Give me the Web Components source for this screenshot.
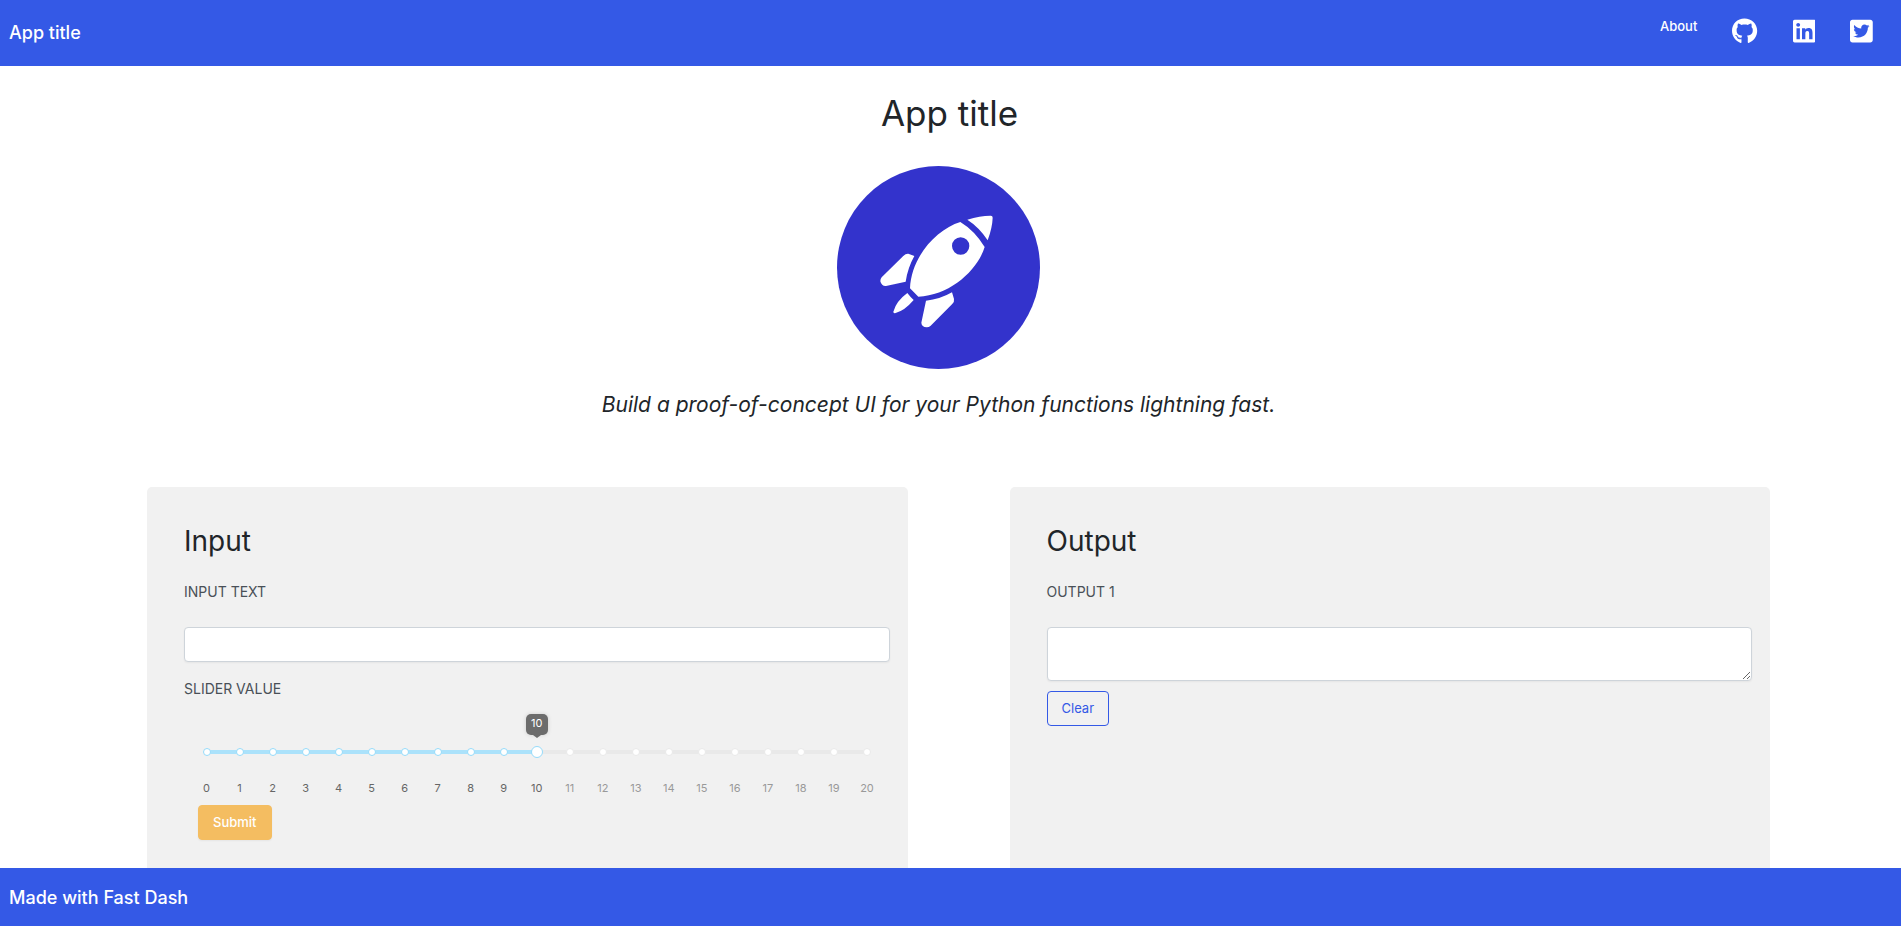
<!DOCTYPE html>
<html lang="en">
<head>
<meta charset="utf-8">
<meta name="viewport" content="width=device-width, initial-scale=1">
<title>App title</title>
<style>
  body { margin: 0; background: #fff; color: #212529; font: 14px/21px Inter, "Open Sans", sans-serif; font-optical-sizing: none; }
</style>
</head>
<body>
<fast-app></fast-app>

<script>
const define = (name, html, setup) => {
  const template = document.createElement('template');
  template.innerHTML = html;
  customElements.define(name, class extends HTMLElement {
    constructor() {
      super();
      this.attachShadow({ mode: 'open' }).append(template.content.cloneNode(true));
    }
    connectedCallback() { if (setup) setup(this, this.shadowRoot); }
  });
};

define('app-header', `
<style>
  :host { display: block; background: #3459e6; color: #fff; }
  header { display: flex; justify-content: space-between; align-items: flex-start; min-height: 66px; padding: 0 28px 0 9px; box-sizing: border-box; }
  .brand { font-size: 18px; line-height: 66px; font-weight: 500; color: inherit; text-decoration: none; }
  nav { display: flex; align-items: flex-start; gap: 35px; padding-top: 18px; }
  nav a { display: block; color: inherit; text-decoration: none; font-size: 13px; line-height: 17px; font-weight: 500; }
  svg { display: block; height: 26px; fill: currentColor; }
</style>
<header>
  <a class="brand" href="#"><slot></slot></a>
  <nav aria-label="Links">
    <a href="#about">About</a>
    <a href="#github" aria-label="GitHub"><svg viewBox="0 0 496 512"><path d="M165.900 397.400c0 2-2.300 3.600-5.200 3.600-3.300.3-5.600-1.300-5.600-3.600 0-2 2.300-3.600 5.200-3.600 3-.3 5.600 1.300 5.600 3.600zm-31.100-4.500c-.7 2 1.300 4.300 4.300 4.900 2.600 1 5.600 0 6.200-2s-1.300-4.300-4.300-5.200c-2.600-.7-5.500.3-6.200 2.300zm44.200-1.700c-2.900.7-4.900 2.600-4.600 4.900.3 2 2.900 3.300 5.900 2.600 2.900-.7 4.900-2.600 4.600-4.600-.3-1.900-3-3.200-5.900-2.900zM244.800 8C106.100 8 0 113.300 0 252c0 110.900 69.800 205.800 169.500 239.200 12.800 2.300 17.300-5.600 17.300-12.100 0-6.200-.3-40.400-.3-61.400 0 0-70 15-84.700-29.800 0 0-11.400-29.100-27.800-36.600 0 0-22.900-15.700 1.600-15.400 0 0 24.900 2 38.600 25.800 21.900 38.600 58.600 27.500 72.900 20.900 2.300-16 8.800-27.100 16-33.700-55.900-6.200-112.300-14.300-112.300-110.500 0-27.500 7.600-41.300 23.600-58.900-2.600-6.500-11.100-33.300 2.600-67.900 20.900-6.500 69 27 69 27 20-5.600 41.500-8.500 62.800-8.500s42.800 2.900 62.800 8.500c0 0 48.100-33.600 69-27 13.700 34.700 5.200 61.400 2.600 67.900 16 17.700 25.800 31.500 25.800 58.900 0 96.500-58.900 104.200-114.800 110.500 9.200 7.900 17 22.900 17 46.400 0 33.700-.3 75.400-.3 83.600 0 6.500 4.600 14.400 17.300 12.100C428.200 457.800 496 362.900 496 252 496 113.300 383.500 8 244.800 8zM97.200 352.900c-1.300 1-1 3.300.7 5.200 1.600 1.600 3.900 2.300 5.200 1 1.300-1 1-3.300-.7-5.200-1.600-1.600-3.900-2.300-5.200-1zm-10.800-8.100c-.7 1.300.3 2.900 2.300 3.900 1.600 1 3.600.7 4.300-.7.7-1.300-.3-2.900-2.300-3.900-2-.6-3.600-.3-4.300.7zm32.400 35.600c-1.600 1.300-1 4.300 1.300 6.200 2.300 2.300 5.200 2.600 6.500 1 1.300-1.300.7-4.300-1.300-6.200-2.200-2.300-5.200-2.600-6.500-1zm-11.400-14.700c-1.600 1-1.600 3.600 0 5.900 1.600 2.300 4.300 3.300 5.600 2.300 1.600-1.300 1.600-3.900 0-6.200-1.400-2.300-4-3.300-5.600-2z"/></svg></a>
    <a href="#linkedin" aria-label="LinkedIn"><svg viewBox="0 0 448 512"><path d="M416 32H31.900C14.300 32 0 46.500 0 64.300v383.400C0 465.500 14.300 480 31.900 480H416c17.600 0 32-14.500 32-32.300V64.300c0-17.800-14.400-32.300-32-32.300zM135.400 416H69V202.200h66.500V416zm-33.200-243c-21.300 0-38.500-17.300-38.500-38.500S80.900 96 102.200 96c21.200 0 38.500 17.300 38.500 38.500 0 21.300-17.200 38.500-38.500 38.500zm282.100 243h-66.400V312c0-24.800-.5-56.700-34.500-56.700-34.600 0-39.900 27-39.900 54.900V416h-66.400V202.200h63.700v29.200h.9c8.900-16.800 30.600-34.500 62.900-34.500 67.200 0 79.700 44.300 79.700 101.900V416z"/></svg></a>
    <a href="#twitter" aria-label="Twitter"><svg viewBox="0 0 448 512"><path d="M400 32H48C21.500 32 0 53.500 0 80v352c0 26.500 21.500 48 48 48h352c26.500 0 48-21.500 48-48V80c0-26.500-21.500-48-48-48zm-48.900 158.800c.2 2.800.2 5.700.2 8.500 0 86.700-66 186.600-186.600 186.600-37.200 0-71.700-10.800-100.700-29.400 5.300.6 10.400.8 15.800.8 30.700 0 58.900-10.400 81.400-28-28.800-.6-53-19.500-61.300-45.500 10.100 1.500 19.200 1.500 29.600-1.200-30-6.100-52.500-32.500-52.500-64.400v-.8c8.700 4.900 18.900 7.900 29.600 8.300a65.447 65.447 0 0 1-29.200-54.600c0-12.200 3.200-23.400 8.900-33.100 32.300 39.800 80.800 65.800 135.200 68.600-9.300-44.500 24-80.600 64-80.600 18.900 0 35.900 7.900 47.900 20.700 14.800-2.800 29-8.300 41.600-15.800-4.900 15.200-15.200 28-28.800 36.100 13.200-1.400 26-5.100 37.800-10.200-8.900 13.100-20.100 24.700-32.900 34z"/></svg></a>
  </nav>
</header>`);

define('app-hero', `
<style>
  :host { display: block; text-align: center; }
  h1 { margin: 0; padding: 24px 2px 0 0; font-size: 35px; line-height: 46px; font-weight: 400; }
  .intro { padding: 30px 24px 0 0; }
  svg { display: block; width: 203px; height: 203px; margin: 0 auto; }
  p { margin: 0; padding-top: 20px; font-size: 21px; line-height: 32px; font-style: italic; }
</style>
<h1><slot></slot></h1>
<div class="intro">
  <svg viewBox="0 0 609 609" role="img" aria-label="Rocket">
    <circle cx="304.500" cy="304.500" r="304.500" fill="#3333cc"/>
    <g fill="#fff">
      <path d="M391 161Q429 149 460 149Q467 148 467 155Q466 185 452 223Q427 184 391 161Z"/>
      <path fill-rule="evenodd" d="M370 168Q413 194 443 243C422 312 340 388 244 392L219 367C223 272 298 190 370 168ZM371 214a26 26 0 1 0 0 52a26 26 0 1 0 0-52Z"/>
      <path d="M232 270Q212 306 206 347L147 360Q134 361 130 346Q130 339 134 334L198 271Q206 262 214 263Z"/>
      <path d="M345 379Q309 400 267 404L253 470Q254 483 269 484Q276 484 281 479L345 415Q353 407 351 399Z"/>
      <path d="M211 381Q221 394 230 402Q203 434 174 442Q169 442 169 437Q178 405 211 381Z"/>
    </g>
  </svg>
  <p><slot name="tagline"></slot></p>
</div>`);

define('app-card', `
<style>
  :host { display: block; background: #f1f1f1; border-radius: 5px 5px 0 0; padding: 36px 18px 28px 37px; min-width: 0; }
  h2 { margin: 0 0 20px; font-size: 28px; line-height: 36px; font-weight: 400; }
</style>
<h2><slot name="heading"></slot></h2>
<slot></slot>`);

define('text-field', `
<style>
  :host { display: block; }
  label { display: block; color: #495057; line-height: 26px; margin-bottom: 22px; text-transform: uppercase; }
  input, textarea { display: block; box-sizing: border-box; width: 100%; height: 35px; padding: 6px 12px; border: 1px solid #ced4da; border-radius: 4px; background: #fff; font: inherit; color: inherit; box-shadow: 0 1px 2px rgba(0, 0, 0, .05); }
  textarea { height: 54px; resize: vertical; }
</style>`, (host, root) => {
  const label = document.createElement('label');
  const field = document.createElement(host.hasAttribute('multiline') ? 'textarea' : 'input');
  label.textContent = host.getAttribute('label');
  label.htmlFor = field.id = 'field';
  root.append(label, field);
});

define('tick-slider', `
<style>
  :host { display: block; }
  label { display: block; color: #495057; line-height: 26px; text-transform: uppercase; margin-bottom: 42px; }
  .track { position: relative; display: grid; align-items: center; margin: 0 16px; }
  .track > * { grid-area: 1 / 1; }
  .rail { height: 4px; margin: 0 6px; border-radius: 2px; background: linear-gradient(90deg, #abe2fb 50%, #e9e9e9 50%); }
  .dots, .marks { display: grid; grid-template-columns: repeat(21, 1fr); justify-items: center; }
  .dots { margin: 0 -10px; }
  .dots i { box-sizing: border-box; width: 8px; height: 8px; border: 1px solid #e9e9e9; border-radius: 50%; background: #fff; }
  .dots i.on { border-color: #96dbfa; }
  input { appearance: none; margin: 0; width: 100%; height: 16px; background: none; position: relative; }
  input::-webkit-slider-runnable-track { height: 12px; background: none; }
  input::-webkit-slider-thumb { appearance: none; box-sizing: border-box; width: 12px; height: 12px; border: 1px solid #96dbfa; border-radius: 50%; background: #fff; }
  .marks { margin: 18px 6px 0; font-size: 11px; line-height: 20px; color: #999; }
  .marks .on { color: #666; }
  output { position: absolute; left: 50%; bottom: 25px; transform: translateX(-50%); box-sizing: border-box; width: 22px; height: 21px; border-radius: 5px; background: #6c6c6c; color: #fff; font-size: 11px; line-height: 18px; text-align: center; box-shadow: 0 0 4px rgba(0, 0, 0, .15); }
  output::after { content: ""; position: absolute; top: 100%; left: 50%; margin-left: -4px; border: 4px solid transparent; border-top: 3px solid #6c6c6c; border-bottom: 0; }
</style>
<label for="range"></label>
<div class="track">
  <div class="rail"></div>
  <div class="dots"></div>
  <input id="range" type="range" min="0" max="20" step="1" value="10">
  <output for="range">10</output>
</div>
<div class="marks"></div>`, (host, root) => {
  root.querySelector('label').textContent = host.getAttribute('label');
  for (let n = 0; n <= 20; n++) {
    const dot = document.createElement('i');
    const mark = document.createElement('span');
    mark.textContent = n;
    if (n <= 10) dot.className = mark.className = 'on';
    root.querySelector('.dots').append(dot);
    root.querySelector('.marks').append(mark);
  }
});

define('app-button', `
<style>
  :host { display: block; }
  button { display: block; box-sizing: border-box; height: 35px; padding: 0 14px 2px; border: 1px solid #3459e6; border-radius: 4px; background: none; color: #3459e6; font: 400 13px/20px Inter, sans-serif; }
  :host([solid]) button { border-color: #f4bd61; background: #f4bd61; color: #fff; font-weight: 500; box-shadow: 0 1px 2px rgba(0, 0, 0, .05); }
</style>
<button type="button"><slot></slot></button>`);

define('app-footer', `
<style>
  :host { display: block; position: sticky; bottom: 0; background: #3459e6; color: #fff; }
  footer { padding: 2px 9px 0; font-size: 18px; line-height: 56px; font-weight: 500; }
</style>
<footer><slot></slot></footer>`);

define('fast-app', `
<style>
  :host { display: flex; flex-direction: column; min-height: 100vh; }
  main { flex: 1; display: flex; flex-direction: column; }
  .cards { flex: 1; display: grid; grid-template-columns: 1fr 1fr; gap: 102px; padding: 66px 131px 0 147px; }
  tick-slider { margin-top: 14px; }
  .submit { margin: 7px 0 0 14px; }
  .clear { margin-top: 10px; }
</style>
<app-header>App title</app-header>
<main>
  <app-hero>App title<span slot="tagline">Build a proof-of-concept UI for your Python functions lightning fast.</span></app-hero>
  <div class="cards">
    <app-card>
      <span slot="heading">Input</span>
      <text-field label="Input text"></text-field>
      <tick-slider label="Slider value"></tick-slider>
      <app-button class="submit" solid>Submit</app-button>
    </app-card>
    <app-card>
      <span slot="heading">Output</span>
      <text-field label="Output 1" multiline></text-field>
      <app-button class="clear">Clear</app-button>
    </app-card>
  </div>
</main>
<app-footer>Made with Fast Dash</app-footer>`);
</script>
</body>
</html>
